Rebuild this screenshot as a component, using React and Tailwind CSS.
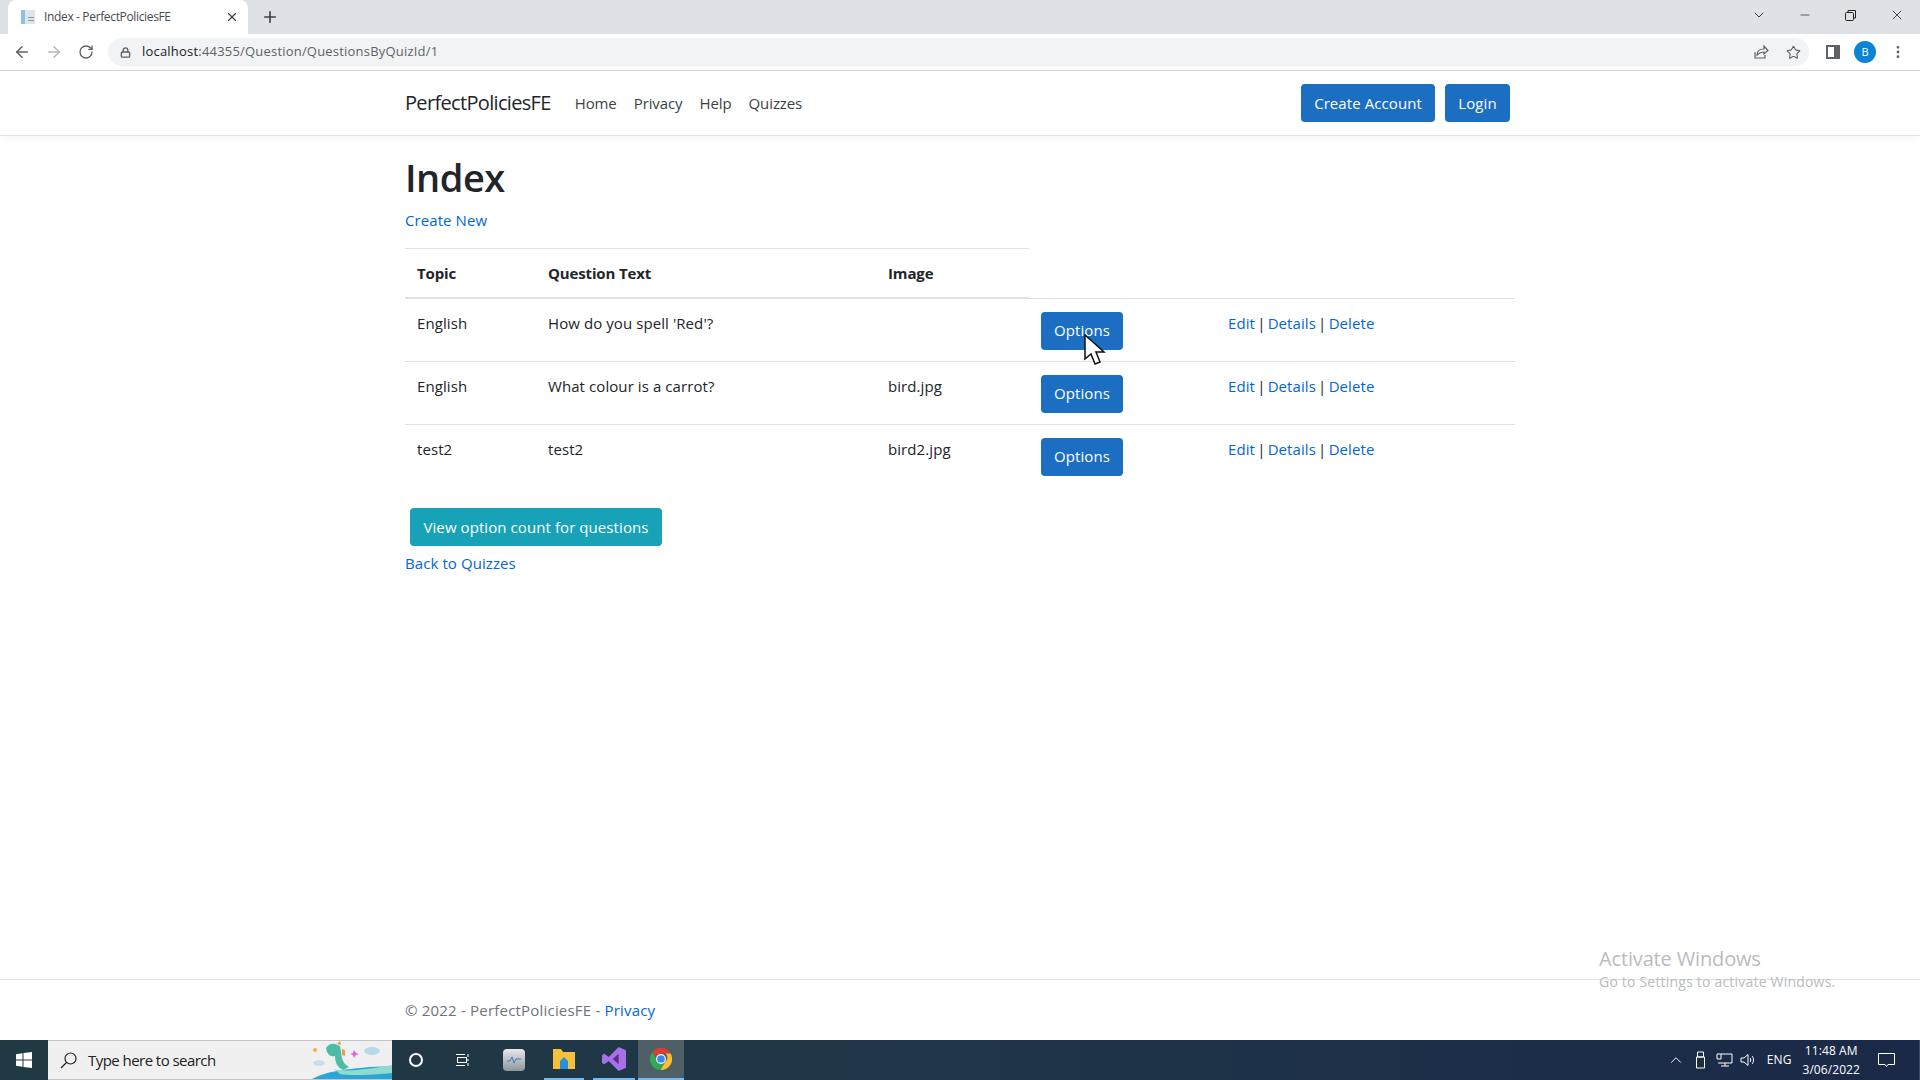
import React from "react";
import { ArrowLeft, ArrowRight, RotateCw, Lock, Star, Plus, X, ChevronDown, Minus, EllipsisVertical, ChevronUp } from "lucide-react";

const questions = [
  { topic: "English", text: "How do you spell 'Red'?", image: "" },
  { topic: "English", text: "What colour is a carrot?", image: "bird.jpg" },
  { topic: "test2", text: "test2", image: "bird2.jpg" },
];

const BrowserChrome = () => (
  <div className="h-[71px] shrink-0 border-b border-[#d8dade] bg-white">
    <div className="flex h-[34px] items-end bg-[#dee1e6] pl-2">
      <div className="flex h-[34px] w-[240px] items-center rounded-t-lg bg-white pl-[12px] pr-2">
        <svg width="16" height="16" viewBox="0 0 16 16">
          <rect x="1" y="1" width="4" height="14" fill="#8fc1e6" />
          <rect x="5" y="1" width="10" height="14" fill="#dfe4ea" />
          <rect x="8" y="8" width="6" height="1" fill="#8b97a5" />
          <rect x="8" y="11" width="6" height="1" fill="#8b97a5" />
        </svg>
        <span className="ml-[8px] flex-1 text-[12px] tracking-[-0.35px] text-[#45494f]">Index - PerfectPoliciesFE</span>
        <X size={14} strokeWidth={2} className="mr-[1px] text-[#3c4043]" />
      </div>
      <Plus size={18} strokeWidth={2.2} className="mb-[8px] ml-[13px] text-[#3c4043]" />
      <div className="flex-1" />
      <div className="flex h-[30px] items-center self-start text-[#222]">
        <ChevronDown size={16} strokeWidth={1.3} className="mr-[31px]" />
        <Minus size={14} strokeWidth={1.2} className="mr-[33px]" />
        <svg width="11" height="11" viewBox="0 0 11 11" fill="none" stroke="#222" className="mr-[33px]">
          <rect x="0.5" y="2.5" width="8" height="8" rx="1" />
          <path d="M3 2.5V.5h7.5V8H8.5" />
        </svg>
        <X size={16} strokeWidth={1.2} className="mr-[15px]" />
      </div>
    </div>
    <div className="flex h-[36px] items-center pl-[13px]">
      <ArrowLeft size={18} strokeWidth={2} className="text-[#5f6368]" />
      <ArrowRight size={18} strokeWidth={2} className="ml-[14px] text-[#b5b8bc]" />
      <RotateCw size={16} strokeWidth={2} className="ml-[15px] text-[#5f6368]" />
      <div className="ml-[14px] flex h-[28px] w-[1701px] items-center rounded-full bg-[#f1f3f4] pl-[12px]">
        <Lock size={11} strokeWidth={3} className="text-[#5f6368]" />
        <span className="ml-[11px] flex-1 text-[13px] tracking-[0.2px] text-[#5f6368]">
          <span className="text-[#202124]">localhost</span>:44355/Question/QuestionsByQuizId/1
        </span>
        <svg width="16" height="16" viewBox="0 0 16 16" fill="none" stroke="#5f6368" strokeWidth="1.2" className="mr-[17px]">
          <path d="M2 8v6h10v-3" />
          <path d="M4 11c0-4 3-6 7-6V2l4 4.5L11 10V8c-3 0-5 1-7 3z" />
        </svg>
        <Star size={15} strokeWidth={1.8} className="mr-[8px] text-[#5f6368]" />
      </div>
      <div className="ml-[17px] h-[14px] w-[14px] border-[2px] border-r-[6px] border-[#5f6368] bg-white" />
      <div className="ml-[14px] flex h-[22px] w-[22px] items-center justify-center rounded-full bg-[#0b84d4] text-[11px] text-white">B</div>
      <EllipsisVertical size={16} strokeWidth={2.2} className="ml-[14px] text-[#5f6368]" />
    </div>
  </div>
);

const Navbar = () => (
  <nav className="flex h-[65px] shrink-0 items-center border-b border-[#dee2e6] pl-[405px] pr-[410px] shadow-[0_1px_8px_rgba(0,0,0,0.05)]">
    <span className="text-[20px] tracking-[-0.67px] text-[#212529]">PerfectPoliciesFE</span>
    <div className="ml-[24px] flex flex-1 gap-[17px] tracking-[-0.1px] text-[#3a3f44]">
      <span>Home</span>
      <span>Privacy</span>
      <span>Help</span>
      <span>Quizzes</span>
    </div>
    <button className="h-[38px] w-[134px] rounded bg-[#1b6ec2] text-white">Create Account</button>
    <button className="ml-[10px] h-[38px] w-[65px] rounded bg-[#1b6ec2] text-white">Login</button>
  </nav>
);

const QuestionTable = () => (
  <table className="mt-[16px] w-[1110px] table-fixed border-collapse text-[#212529]">
    <thead>
      <tr className="h-[50px] font-bold tracking-[-0.15px]">
        <th className="w-[131px] border-y border-b-2 border-[#dee2e6] pl-3 text-left">Topic</th>
        <th className="w-[340px] border-y border-b-2 border-[#dee2e6] pl-3 text-left">Question Text</th>
        <th className="w-[153px] border-y border-b-2 border-[#dee2e6] pl-3 text-left">Image</th>
        <th className="w-[187px]" />
        <th />
      </tr>
    </thead>
    <tbody>
      {questions.map((q, index) => (
        <tr key={index} className="border-t border-[#dee2e6]">
          <td className="h-[63px] pl-3 pt-[13px] align-top">{q.topic}</td>
          <td className="pl-3 pt-[13px] align-top">{q.text}</td>
          <td className="pl-3 pt-[13px] align-top">{q.image}</td>
          <td className="pl-3 pt-[13px] align-top">
            <button className="h-[38px] w-[82px] rounded bg-[#1b6ec2] text-white">Options</button>
          </td>
          <td className="pl-3 pt-[13px] align-top [word-spacing:-1.8px]">
            <a className="text-[#0366d6]">Edit</a> | <a className="text-[#0366d6]">Details</a> | <a className="text-[#0366d6]">Delete</a>
          </td>
        </tr>
      ))}
    </tbody>
  </table>
);

const Taskbar = () => (
  <div className="flex h-[40px] shrink-0 items-center border-r border-[#3d4d66] bg-gradient-to-r from-[#203a43] via-[#1f3548] to-[#1a2947] text-white">
    <div className="flex h-full w-[48px] items-center justify-center">
      <svg width="16" height="16" viewBox="0 0 16 16" fill="white">
        <path d="M0 2.2 6.5 1.3v6.2H0zM7.5 1.1 16 0v7.5H7.5zM0 8.5h6.5v6.2L0 13.8zM7.5 8.5H16V16l-8.5-1.1z" />
      </svg>
    </div>
    <div className="flex h-full w-[344px] items-center overflow-hidden border-y border-[#c4c4c4] bg-[#f0f0f0] pl-[12px] text-[#222]">
      <svg width="17" height="17" viewBox="0 0 17 17" fill="none" stroke="#222" strokeWidth="1.2">
        <circle cx="10.5" cy="6.5" r="5.5" />
        <path d="M6.5 10.5 1 16" />
      </svg>
      <span className="ml-[11px] flex-1 text-[15px] tracking-[-0.55px]">Type here to search</span>
      <svg width="80" height="38" viewBox="0 0 80 38" className="shrink-0">
        <path d="M0 38C14 31 30 27 80 25v13z" fill="#2aa5d8" />
        <path d="M22 28c12 3 30 1 58-4v8c-20 2-44 3-52 1z" fill="#8fdccf" />
        <path d="M14 7c2-3 5-5 9-4l5 2c1 4 1 8 2 12 1 4 3 7 7 9l-6 3c-6-3-8-8-8-14-4 1-8-1-9-8z" fill="#4dbca6" />
        <path d="M25 3l3-3 1 4zM30 8l3 1v6l-3-1z" fill="#e8a13c" />
        <path d="M42 9l2 3 3 1-3 1-2 3-1-3-3-1 3-1z" fill="#e45fe0" />
        <ellipse cx="60" cy="10" rx="8" ry="4" fill="#b9d8ea" />
        <ellipse cx="7" cy="22" rx="6" ry="3" fill="#c7dfec" />
        <circle cx="3" cy="9" r="2" fill="#f3b03c" />
      </svg>
    </div>
    <div className="flex h-full items-center">
      <div className="ml-[17px] h-[14px] w-[14px] rounded-full border-2 border-white" />
      <svg width="14" height="14" viewBox="0 0 14 14" fill="none" stroke="white" className="ml-[33px]">
        <rect x="1.5" y="4.5" width="9" height="5" />
        <path d="M0 1.5h9M0 12.5h9M12 1v3M12 6v2M12 10v3" />
      </svg>
      <div className="ml-[33px] flex h-[22px] w-[22px] items-center justify-center rounded-sm bg-gradient-to-b from-[#e8e8e8] to-[#8f979c]">
        <svg width="14" height="10" viewBox="0 0 14 10" fill="none" stroke="#3a7bc8"><path d="M0 6h3l2-4 2 6 2-4h5" /></svg>
      </div>
      <div className="ml-[19px] flex h-full w-[40px] items-center justify-center border-b-2 border-[#76b9ed]">
        <svg width="22" height="20" viewBox="0 0 22 20">
          <path d="M0 0h8l2 3h12v17H0z" fill="#f5c13d" />
          <path d="M7 20v-8l4-4 4 4v8z" fill="#2b8fd8" />
        </svg>
      </div>
      <div className="ml-[9px] flex h-full w-[42px] items-center justify-center border-b-2 border-[#76b9ed]">
        <svg width="24" height="24" viewBox="0 0 18 18" fill="#a971e8">
          <path d="M12.5 0 18 2.5v13L12.5 18 5 10.5 1.8 13 0 12V6l1.8-1L5 7.5z" />
          <path d="M12.5 5 8 9l4.5 4z" fill="#5c2d91" />
        </svg>
      </div>
      <div className="ml-[3px] flex h-[40px] w-[46px] items-center justify-center border-b-2 border-[#76b9ed] bg-[#4f5f68]">
        <svg width="22" height="22" viewBox="0 0 20 20">
          <path d="M10 0a10 10 0 0 1 8.7 5H10a5 5 0 0 0-4.5 3L2.3 3.6A10 10 0 0 1 10 0z" fill="#e33b2e" />
          <path d="M18.7 5A10 10 0 0 1 9.5 20l4-7a5 5 0 0 0 .6-8z" fill="#fbc02d" />
          <path d="M2.3 3.6 6.5 11a5 5 0 0 0 7 2l-4 7A10 10 0 0 1 2.3 3.6z" fill="#34a853" />
          <circle cx="10" cy="10" r="4" fill="#4285f4" stroke="white" />
        </svg>
      </div>
    </div>
    <div className="flex-1" />
    <ChevronUp size={18} strokeWidth={1.3} className="mr-[9px]" />
    <svg width="14" height="18" viewBox="0 0 14 18" fill="none" stroke="white" className="mr-[8px]">
      <path d="M3.5 1h6v5h-6zM2.5 6h8v11h-8z" />
    </svg>
    <svg width="17" height="14" viewBox="0 0 17 14" fill="none" stroke="white" className="mr-[7px]">
      <path d="M5 1h11v9H2M9 10v3M5 13h8M1 1h4v5H1z" />
    </svg>
    <svg width="16" height="14" viewBox="0 0 16 14" fill="none" stroke="white" className="mr-[11px]">
      <path d="M1 5h3l4-3.5v11L4 9H1zM10 5c1 1 1 3 0 4M12 3c2 2 2 6 0 8" />
    </svg>
    <span className="mr-[11px] text-[12px]">ENG</span>
    <div className="mr-[18px] text-center text-[12px] leading-[19px]">
      <div>11:48 AM</div>
      <div>3/06/2022</div>
    </div>
    <svg width="17" height="15" viewBox="0 0 17 15" fill="none" stroke="white" className="mr-[24px]">
      <path d="M.5.5h16v11H10l-1.5 2L7 11.5H.5z" />
    </svg>
  </div>
);

export default function App() {
  return (
    <div className="relative flex h-screen flex-col overflow-hidden bg-white font-['Open_Sans',sans-serif] text-[15px] tracking-[0.08px] text-[#212529]">
      <BrowserChrome />
      <Navbar />
      <main className="flex-1 pl-[405px] pt-[18px]">
        <h1 className="text-[38px] font-semibold leading-[46px] tracking-[-0.5px]">Index</h1>
        <a className="mt-[9px] block text-[#0366d6]">Create New</a>
        <QuestionTable />
        <button className="ml-[5px] mt-[21px] block h-[38px] w-[252px] rounded bg-[#17a2b8] text-white">View option count for questions</button>
        <a className="mt-[6px] block text-[#0366d6]">Back to Quizzes</a>
      </main>
      <footer className="flex h-[61px] shrink-0 items-center border-t border-[#dee2e6] pl-[405px] tracking-[0.2px] text-[#6c757d]">
        © 2022 - PerfectPoliciesFE - <a className="ml-1 text-[#0366d6]">Privacy</a>
      </footer>
      <Taskbar />
      <div className="absolute left-[1599px] top-[946px] text-[#b9bcc0]">
        <div className="text-[20px] leading-[26px] tracking-[-0.15px]">Activate Windows</div>
        <div className="text-[14px] leading-[20px] tracking-[0.2px]">Go to Settings to activate Windows.</div>
      </div>
      <svg width="22" height="32" viewBox="0 0 22 32" className="absolute left-[1084px] top-[334px]">
        <path d="M1 1v24l6-5 4 10 5-2-4-10h8z" fill="white" stroke="#111" strokeWidth="1.5" />
      </svg>
    </div>
  );
}
